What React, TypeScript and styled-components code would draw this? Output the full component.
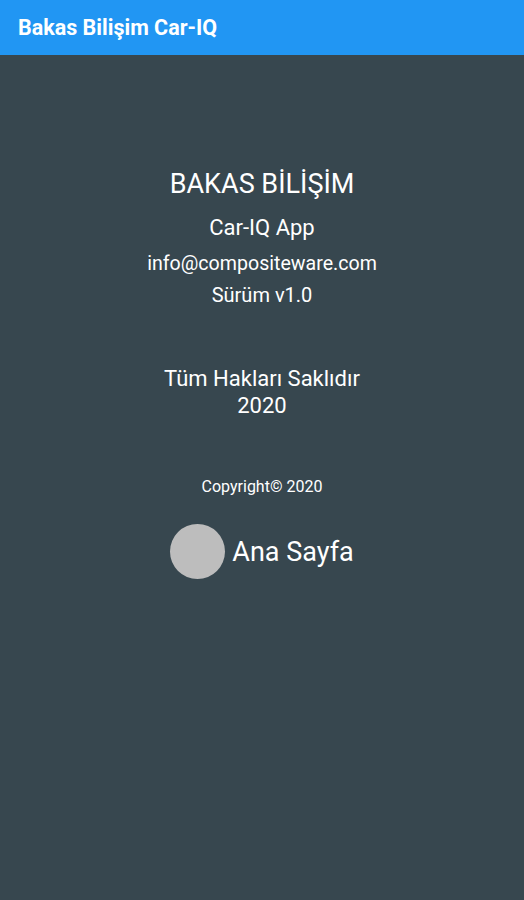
import React from "react";
import styled, { createGlobalStyle } from "styled-components";

const GlobalStyle = createGlobalStyle`
    html, body {
        margin: 0;
        padding: 0;
        background: #37474f;
        font-family: Roboto, "Noto Sans", sans-serif;
    }
`;

const Screen = styled.div`
    width: 524px;
    height: 900px;
    display: flex;
    flex-direction: column;
    background: #37474f;
`;

const AppBar = styled.header`
    height: 55px;
    background: #2196f3;
    display: flex;
    align-items: center;
    padding: 0 18px;
    flex-shrink: 0;
`;

const AppTitle = styled.h1`
    margin: 0;
    font-size: 21.5px;
    font-weight: 700;
    color: #ffffff;
`;

const Body = styled.main`
    display: flex;
    flex-direction: column;
    align-items: center;
    padding-top: 113px;
    color: #ffffff;
`;

const Line = styled.div<{ $size: number; $gap?: number }>`
    font-size: ${(p) => p.$size}px;
    line-height: 1.2;
    margin-top: ${(p) => p.$gap ?? 0}px;
    text-align: center;
`;

const HomeButton = styled.div`
    display: flex;
    align-items: center;
    gap: 7px;
    margin-top: 28px;
`;

const Avatar = styled.div`
    width: 55px;
    height: 55px;
    border-radius: 50%;
    background: #bdbdbd;
`;

const HomeLabel = styled.span`
    font-size: 27px;
    color: #ffffff;
`;

const App: React.FC = () => {
    return (
        <Screen>
            <GlobalStyle />
            <AppBar>
                <AppTitle>Bakas Bilişim Car-IQ</AppTitle>
            </AppBar>
            <Body>
                <Line $size={27}>BAKAS BİLİŞİM</Line>
                <Line $size={22} $gap={15}>Car-IQ App</Line>
                <Line $size={19.6} $gap={10}>info@compositeware.com</Line>
                <Line $size={20} $gap={8}>Sürüm v1.0</Line>
                <Line $size={22} $gap={59}>Tüm Hakları Saklıdır<br />2020</Line>
                <Line $size={16} $gap={58}>Copyright© 2020</Line>
                <HomeButton>
                    <Avatar />
                    <HomeLabel>Ana Sayfa</HomeLabel>
                </HomeButton>
            </Body>
        </Screen>
    );
};

export default App;
